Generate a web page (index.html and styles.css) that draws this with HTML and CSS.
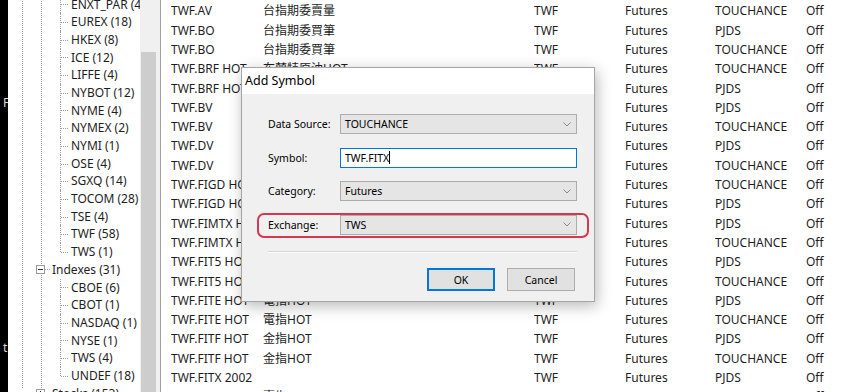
FILE: index.html
```html
<!DOCTYPE html>
<html lang="zh-Hant">
  <head>
    <meta charset="UTF-8" />
    <meta name="viewport" content="width=device-width, initial-scale=1.0" />
    <title>Add Symbol</title>
    <link rel="stylesheet" href="styles.css">
  </head>

  <body>
    <div class="app">
      <div class="edge">
        <span class="edge-f">F</span>
        <span class="edge-t">t</span>
      </div>

      <nav class="tree">
        <div class="tree-root">
          <div class="tree-mid">
            <ul class="tree-children first">
              <li>ENXT_PAR (4)</li>
              <li>EUREX (18)</li>
              <li>HKEX (8)</li>
              <li>ICE (12)</li>
              <li>LIFFE (4)</li>
              <li>NYBOT (12)</li>
              <li>NYME (4)</li>
              <li>NYMEX (2)</li>
              <li>NYMI (1)</li>
              <li>OSE (4)</li>
              <li>SGXQ (14)</li>
              <li>TOCOM (28)</li>
              <li>TSE (4)</li>
              <li>TWF (58)</li>
              <li>TWS (1)</li>
            </ul>
            <div class="node">
              <svg class="node-box" width="9" height="9" viewBox="0 0 9 9">
                <rect x="0.5" y="0.5" width="8" height="8" fill="#fff" stroke="#9a9a9a" />
                <line x1="2" y1="4.5" x2="7" y2="4.5" stroke="#333" />
              </svg>
              <span class="node-link"></span>
              <span class="node-text">Indexes (31)</span>
            </div>
            <ul class="tree-children">
              <li>CBOE (6)</li>
              <li>CBOT (1)</li>
              <li>NASDAQ (1)</li>
              <li>NYSE (1)</li>
              <li>TWS (4)</li>
              <li>UNDEF (18)</li>
            </ul>
            <div class="node">
              <svg class="node-box" width="9" height="9" viewBox="0 0 9 9">
                <rect x="0.5" y="0.5" width="8" height="8" fill="#fff" stroke="#9a9a9a" />
                <line x1="2" y1="4.5" x2="7" y2="4.5" stroke="#333" />
                <line x1="4.5" y1="2" x2="4.5" y2="7" stroke="#333" />
              </svg>
              <span class="node-link"></span>
              <span class="node-text">Stocks (153)</span>
            </div>
          </div>
        </div>
      </nav>

      <div class="vscroll"><div class="vscroll-thumb"></div></div>
      <div class="splitter"></div>

      <!-- las filas 5 a 15 quedan tapadas por el dialogo en sus columnas centrales -->
      <main class="list">
        <div class="row"><span>TWF.AV</span><span>台指期委賣量</span><span>TWF</span><span>Futures</span><span>TOUCHANCE</span><span>Off</span></div>
        <div class="row"><span>TWF.BO</span><span>台指期委買筆</span><span>TWF</span><span>Futures</span><span>PJDS</span><span>Off</span></div>
        <div class="row"><span>TWF.BO</span><span>台指期委買筆</span><span>TWF</span><span>Futures</span><span>TOUCHANCE</span><span>Off</span></div>
        <div class="row"><span>TWF.BRF HOT</span><span>布蘭特原油HOT</span><span>TWF</span><span>Futures</span><span>TOUCHANCE</span><span>Off</span></div>
        <div class="row"><span>TWF.BRF HOT</span><span></span><span></span><span>Futures</span><span>PJDS</span><span>Off</span></div>
        <div class="row"><span>TWF.BV</span><span></span><span></span><span>Futures</span><span>PJDS</span><span>Off</span></div>
        <div class="row"><span>TWF.BV</span><span></span><span></span><span>Futures</span><span>TOUCHANCE</span><span>Off</span></div>
        <div class="row"><span>TWF.DV</span><span></span><span></span><span>Futures</span><span>PJDS</span><span>Off</span></div>
        <div class="row"><span>TWF.DV</span><span></span><span></span><span>Futures</span><span>TOUCHANCE</span><span>Off</span></div>
        <div class="row"><span>TWF.FIGD HOT</span><span></span><span></span><span>Futures</span><span>TOUCHANCE</span><span>Off</span></div>
        <div class="row"><span>TWF.FIGD HOT</span><span></span><span></span><span>Futures</span><span>PJDS</span><span>Off</span></div>
        <div class="row"><span>TWF.FIMTX HOT</span><span></span><span></span><span>Futures</span><span>PJDS</span><span>Off</span></div>
        <div class="row"><span>TWF.FIMTX HOT</span><span></span><span></span><span>Futures</span><span>TOUCHANCE</span><span>Off</span></div>
        <div class="row"><span>TWF.FIT5 HOT</span><span></span><span></span><span>Futures</span><span>PJDS</span><span>Off</span></div>
        <div class="row"><span>TWF.FIT5 HOT</span><span></span><span></span><span>Futures</span><span>TOUCHANCE</span><span>Off</span></div>
        <div class="row"><span>TWF.FITE HOT</span><span>電指HOT</span><span>TWF</span><span>Futures</span><span>PJDS</span><span>Off</span></div>
        <div class="row"><span>TWF.FITE HOT</span><span>電指HOT</span><span>TWF</span><span>Futures</span><span>TOUCHANCE</span><span>Off</span></div>
        <div class="row"><span>TWF.FITF HOT</span><span>金指HOT</span><span>TWF</span><span>Futures</span><span>PJDS</span><span>Off</span></div>
        <div class="row"><span>TWF.FITF HOT</span><span>金指HOT</span><span>TWF</span><span>Futures</span><span>TOUCHANCE</span><span>Off</span></div>
        <div class="row"><span>TWF.FITX 2002</span><span></span><span>TWF</span><span>Futures</span><span>PJDS</span><span>Off</span></div>
        <div class="row"><span>TWF.FITX HOT</span><span>臺指HOT</span><span>TWF</span><span>Futures</span><span>TOUCHANCE</span><span>Off</span></div>
      </main>
    </div>

    <!-- dialogo encima de la lista -->
    <section class="dialog">
      <header class="dialog-title">Add Symbol</header>
      <div class="dialog-body">
        <div class="form-row">
          <label>Data Source:</label>
          <div class="select">
            <span>TOUCHANCE</span>
            <svg width="8" height="5" viewBox="0 0 8 5"><polyline points="0.5,0.5 4,4 7.5,0.5" fill="none" stroke="#8a8a8a" /></svg>
          </div>
        </div>
        <div class="form-row">
          <label>Symbol:</label>
          <div class="input"><span>TWF.FITX</span><span class="caret"></span></div>
        </div>
        <div class="form-row">
          <label>Category:</label>
          <div class="select">
            <span>Futures</span>
            <svg width="8" height="5" viewBox="0 0 8 5"><polyline points="0.5,0.5 4,4 7.5,0.5" fill="none" stroke="#8a8a8a" /></svg>
          </div>
        </div>
        <div class="form-row marked">
          <label>Exchange:</label>
          <div class="select">
            <span>TWS</span>
            <svg width="8" height="5" viewBox="0 0 8 5"><polyline points="0.5,0.5 4,4 7.5,0.5" fill="none" stroke="#8a8a8a" /></svg>
          </div>
        </div>
        <div class="separator"></div>
        <div class="buttons">
          <button class="btn btn-default">OK</button>
          <button class="btn">Cancel</button>
        </div>
      </div>
    </section>
  </body>
</html>
```

FILE: styles.css
```css
html {
  box-sizing: border-box;
  font-family: "Noto Sans", "Noto Sans CJK TC", sans-serif;
  font-size: 12px;
}

*,
*:before,
*:after {
  box-sizing: inherit;
}

body {
  margin: 0;
  width: 866px;
  height: 392px;
  overflow: hidden;
  position: relative;
  background-color: #fff;
  color: #1e1e1e;
}

.app {
  display: flex;
  height: 392px;
}

/* franja negra de la izquierda */
.edge {
  width: 8px;
  flex-shrink: 0;
  background-color: #000;
  color: #d8d8d8;
  overflow: hidden;
  font-size: 12px;
  line-height: 16px;
}

.edge span {
  display: block;
  padding-left: 3px;
}

.edge-f {
  margin-top: 95px;
}

.edge-t {
  margin-top: 229px;
}

/* arbol de exchanges */
.tree {
  width: 132px;
  flex-shrink: 0;
  overflow: hidden;
  white-space: nowrap;
  background-color: #fff;
}

.tree-root {
  height: 100%;
  margin-left: 14px;
  border-left: 1px dotted #a0a0a0;
}

.tree-mid {
  height: 100%;
  margin-left: 18px;
  border-left: 1px dotted #a0a0a0;
}

.tree-children {
  list-style: none;
  margin: 0 0 0 18px;
  padding: 0;
}

.tree-children.first {
  margin-top: -4.5px;
}

.tree-children li {
  position: relative;
  height: 17.7px;
  line-height: 17.7px;
  padding-left: 11px;
}

.tree-children li:before {
  content: "";
  position: absolute;
  left: 0;
  top: 0;
  bottom: 0;
  border-left: 1px dotted #a0a0a0;
}

.tree-children li:last-child:before {
  bottom: 50%;
}

.tree-children li:after {
  content: "";
  position: absolute;
  left: 1px;
  top: 50%;
  width: 7px;
  border-top: 1px dotted #a0a0a0;
}

.node {
  display: flex;
  align-items: center;
  height: 17.7px;
  margin-left: -6px;
}

.node-box {
  flex-shrink: 0;
}

.node-link {
  width: 5px;
  border-top: 1px dotted #a0a0a0;
}

.node-text {
  margin-left: 2px;
  line-height: 17.7px;
}

/* scroll del arbol */
.vscroll {
  width: 17px;
  flex-shrink: 0;
  background-color: #f0f0f0;
  padding: 52px 1px 0;
}

.vscroll-thumb {
  height: 100%;
  background-color: #cdcdcd;
}

.splitter {
  width: 4px;
  flex-shrink: 0;
  background-color: #f0f0f0;
  border-right: 1px solid #a0a0a0;
}

/* lista de simbolos */
.list {
  flex-grow: 1;
  padding: 1.4px 0 0 10px;
  white-space: nowrap;
  overflow: hidden;
}

.row {
  display: grid;
  grid-template-columns: 92px 271px 91px 90px 91px 1fr;
  height: 19.3px;
  line-height: 19.3px;
}

.row span {
  overflow: hidden;
}

/* ventana Add Symbol */
.dialog {
  position: absolute;
  left: 241px;
  top: 67px;
  width: 354px;
  height: 235px;
  display: flex;
  flex-direction: column;
  border: 1px solid #a5a5a5;
  background-color: #f0f0f0;
  box-shadow: 2px 4px 14px rgba(0, 0, 0, 0.28);
  color: #000;
}

.dialog-title {
  height: 26px;
  line-height: 26px;
  padding-left: 3px;
  background-color: #fff;
  font-size: 12.5px;
}

.dialog-body {
  flex-grow: 1;
  display: flex;
  flex-direction: column;
  gap: 13.5px;
  padding: 20px 17px 0 26px;
  font-size: 10.5px;
}

.form-row {
  display: flex;
  align-items: center;
  height: 20px;
  position: relative;
}

.form-row label {
  width: 72px;
  flex-shrink: 0;
}

.select,
.input {
  width: 237px;
  height: 20px;
  display: flex;
  align-items: center;
  padding: 0 5px 0 4px;
}

.select {
  justify-content: space-between;
  background-color: #e5e5e5;
  border: 1px solid #acacac;
}

.input {
  background-color: #fff;
  border: 1px solid #0078d7;
}

.caret {
  width: 1px;
  height: 13px;
  background-color: #000;
}

.marked:after {
  content: "";
  position: absolute;
  top: -2px;
  bottom: -3px;
  left: -11px;
  right: -12px;
  border: 2px solid #d6384f;
  border-radius: 7px;
}

.separator {
  margin-top: 3px;
  width: 309px;
  border-top: 1px solid #d5d5d5;
  border-bottom: 1px solid #fff;
}

.buttons {
  display: flex;
  justify-content: flex-end;
  gap: 12px;
  width: 309px;
  padding-right: 2px;
  margin-top: 1.5px;
}

.btn {
  width: 68px;
  height: 23px;
  font-family: inherit;
  font-size: 10.5px;
  color: #000;
  background-color: #e1e1e1;
  border: 1px solid #adadad;
  padding: 0;
}

.btn-default {
  border-color: #0078d7;
  box-shadow: inset 0 0 0 1px #0078d7;
}
```
